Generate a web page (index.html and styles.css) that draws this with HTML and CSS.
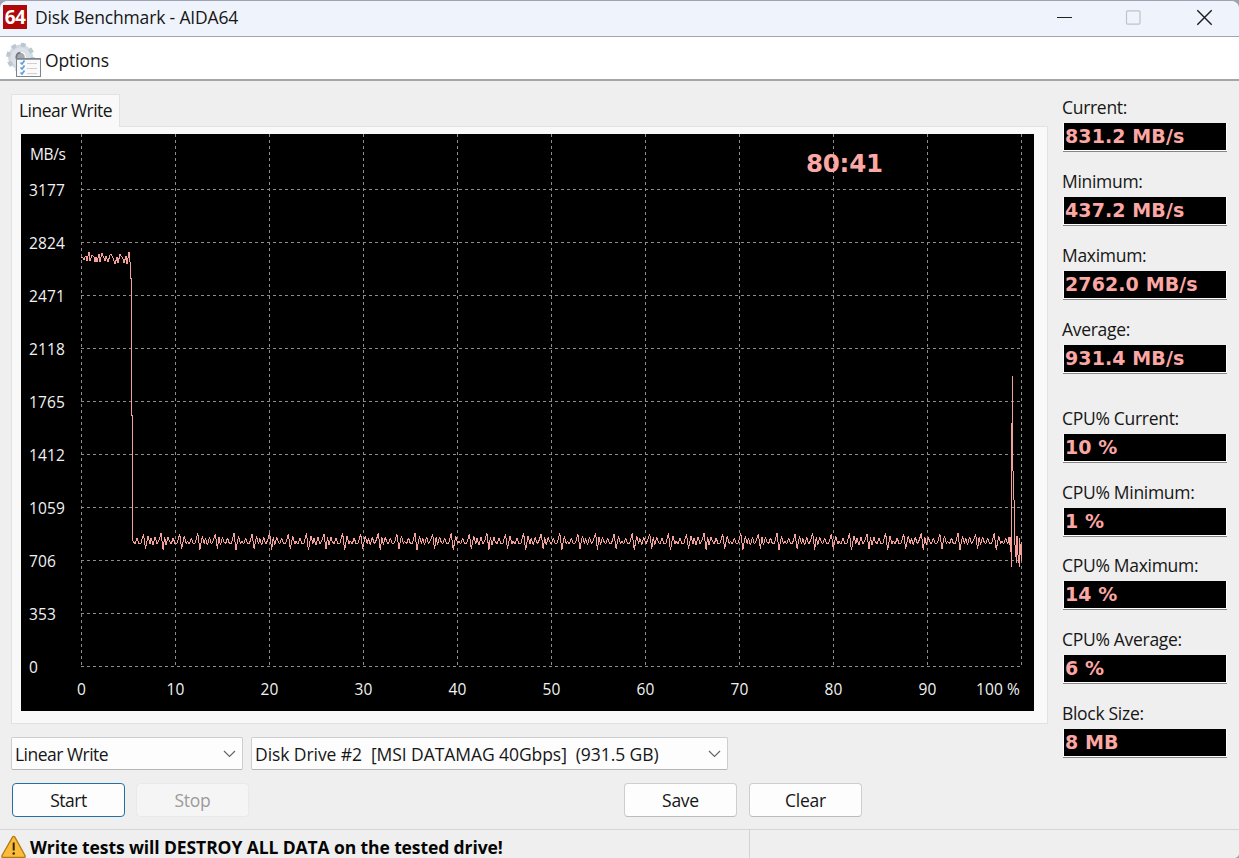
FILE: index.html
```html
<!DOCTYPE html>
<html lang="en">
<head>
<meta charset="utf-8">
<title>Disk Benchmark - AIDA64</title>
<link rel="stylesheet" href="styles.css">
</head>
<body>
<div class="window">
  <header class="titlebar">
    <span class="logo">64</span>
    <h1 class="title">Disk Benchmark - AIDA64</h1>
    <svg class="controls" width="170" height="36" viewBox="0 0 170 36">
      <path d="M6 16.500H21" stroke="#222" stroke-width="1.200"/>
      <rect x="75.500" y="9.900" width="13.500" height="13.200" rx="1.200" fill="none" stroke="#c0c2c9" stroke-width="1.200"/>
      <path d="M146.300 9.300L160.700 23.700M160.700 9.300L146.300 23.700" stroke="#1b1b20" stroke-width="1.400"/>
    </svg>
  </header>
  <nav class="menubar">
    <svg class="gear" width="36" height="38" viewBox="0 0 36 38">
      <g transform="translate(15.500 17)">
        <circle r="9" fill="none" stroke="#d3dae1" stroke-width="7"/>
        <circle r="12.300" fill="none" stroke="#bdc7d1" stroke-width="4" stroke-dasharray="4.800 4.860"/>
        <circle r="7.500" fill="none" stroke="#dbe1e7" stroke-width="4"/>
        <circle r="4.300" fill="#a4a9af"/>
        <path d="M-3 3A4.300 4.300 0 0 1 0-4.300" fill="none" stroke="#737980" stroke-width="1.800"/>
      </g>
      <rect x="11.500" y="18.500" width="24" height="18" fill="#fafafa" stroke="#7d858d"/>
      <path d="M12 19.500H35" stroke="#9aa0a6"/>
      <path d="M15.500 22.500l1.500 1.500 2.500-3.500M15.500 27.500l1.500 1.500 2.500-3.500M15.500 32.500l1.500 1.500 2.500-3.500" fill="none" stroke="#5d9fdb" stroke-width="1.700"/>
      <path d="M22 23.500H32M22 28.500H32M22 33.500H32" stroke="#d1d1d1"/>
    </svg>
    <span class="menu-label">Options</span>
  </nav>
  <main class="body">
    <section class="left">
      <div class="tab">Linear Write</div>
      <div class="panel"><svg class="chart" id="chart" width="1013" height="577" viewBox="21 134 1013 577"></svg></div>
      <div class="selects">
        <div class="select mode"><span>Linear Write</span><svg width="13" height="8" viewBox="0 0 13 8"><path d="M1 1l5.500 5.500L12 1"/></svg></div>
        <div class="select drive"><span>Disk Drive #2&nbsp; [MSI DATAMAG 40Gbps]&nbsp; (931.5 GB)</span><svg width="13" height="8" viewBox="0 0 13 8"><path d="M1 1l5.500 5.500L12 1"/></svg></div>
      </div>
      <div class="buttons">
        <button class="btn primary">Start</button>
        <button class="btn stop" disabled>Stop</button>
        <button class="btn save">Save</button>
        <button class="btn">Clear</button>
      </div>
    </section>
    <aside class="stats">
      <div class="stat"><label>Current:</label><output>831.2 MB/s</output></div>
      <div class="stat"><label>Minimum:</label><output>437.2 MB/s</output></div>
      <div class="stat"><label>Maximum:</label><output>2762.0 MB/s</output></div>
      <div class="stat average"><label>Average:</label><output>931.4 MB/s</output></div>
      <div class="stat"><label>CPU% Current:</label><output>10 %</output></div>
      <div class="stat"><label>CPU% Minimum:</label><output>1 %</output></div>
      <div class="stat"><label>CPU% Maximum:</label><output>14 %</output></div>
      <div class="stat"><label>CPU% Average:</label><output>6 %</output></div>
      <div class="stat"><label>Block Size:</label><output>8 MB</output></div>
    </aside>
  </main>
  <footer class="statusbar">
    <div class="message">
      <svg width="26" height="24" viewBox="0 0 26 24">
        <path d="M12.500 2.200Q13.700.500 14.900 2.200L25 20.500Q25.700 22.300 24 22.500H3Q1.300 22.300 2 20.500Z" fill="#fbbc3c" stroke="#b57914" stroke-width="1.300"/>
        <path d="M13.700 7.500V15.500" stroke="#332608" stroke-width="2"/><circle cx="13.700" cy="18.500" r="1.250" fill="#332608"/>
      </svg>
      <span>Write tests will DESTROY ALL DATA on the tested drive!</span>
    </div>
    <div class="spare"></div>
  </footer>
</div>
<script src="chart.js"></script>
</body>
</html>
```

FILE: styles.css
```css
* { box-sizing: border-box; }
body {
  margin: 0;
  background: #9ea2b2;
  font: 17.500px/24px "Open Sans", "Noto Sans", sans-serif;
  letter-spacing: -0.250px;
  color: #161616;
  overflow: hidden;
}
.window {
  width: 1239px;
  height: 858px;
  display: flex;
  flex-direction: column;
  background: #efefef;
  border-radius: 8px 8px 5px 0;
  border-top: 1px solid #9ea2b0;
  overflow: hidden;
}
.titlebar {
  height: 36px;
  display: flex;
  align-items: center;
  padding-left: 3px;
  background: #eff3fb;
  border-bottom: 1px solid #a3a5ad;
}
.logo {
  width: 24px;
  height: 24px;
  margin-top: -3px;
  background: #b00808;
  color: #fff;
  font: bold 19px/24px "Open Sans", sans-serif;
  letter-spacing: -0.500px;
  text-align: center;
}
.title { margin: -4px 0 0 8px; font: inherit; letter-spacing: -0.160px; }
.controls { margin-left: auto; margin-right: 18px; }
.controls path { fill: none; }
.menubar {
  height: 44px;
  display: flex;
  align-items: center;
  padding-left: 5px;
  background: #fff;
  border-bottom: 2px solid #a5a5a5;
}
.gear { margin-top: 1px; }
.menu-label { margin-left: 4px; margin-top: 3px; letter-spacing: -0.100px; }
.body { height: 748px; display: flex; }
.left { width: 1048px; padding: 13px 0 0 11px; margin-right: 14px; flex: none; }
.tab {
  position: relative;
  width: 109px;
  height: 33px;
  padding: 3px 0 0 7px;
  background: #f9f9f9;
  border: 1px solid #e2e2e2;
  border-bottom: 0;
  letter-spacing: -0.520px;
}
.panel {
  width: 1037px;
  height: 598px;
  margin-top: -1px;
  padding: 7px 0 0 9px;
  background: #f9f9f9;
  border: 1px solid #e2e2e2;
}
.chart { display: block; background: #000; }
.grid { stroke: #8c8c8c; stroke-width: 1; stroke-dasharray: 3 3; shape-rendering: crispEdges; }
.trace { fill: none; stroke: #f3a09b; stroke-width: 1; stroke-linejoin: bevel; shape-rendering: crispEdges; }
.axis { fill: #f2f2f2; font-size: 15.500px; letter-spacing: 0.100px; }
.clock { fill: #fba7a3; font: bold 24.500px "DejaVu Sans", sans-serif; letter-spacing: 0; }
.selects { display: flex; gap: 8px; margin-top: 13px; }
.select {
  height: 33px;
  display: flex;
  align-items: center;
  justify-content: space-between;
  padding: 1px 6px 0 3px;
  background: #fdfdfd;
  border: 1px solid #cecece;
  border-bottom-color: #b5b5b5;
  border-radius: 2px;
  white-space: nowrap;
}
.select path { fill: none; stroke: #666; stroke-width: 1.200; }
.mode { width: 232px; letter-spacing: -0.520px; }
.drive { width: 477px; letter-spacing: -0.070px; }
.buttons { display: flex; margin: 13px 0 0 1px; gap: 12px; }
.btn {
  width: 113px;
  height: 34px;
  padding: 0 0 1px;
  background: #fdfdfd;
  border: 1px solid #cecece;
  border-bottom-color: #bbb;
  border-radius: 4px;
  color: inherit;
  font: inherit;
  letter-spacing: inherit;
}
.primary { border-color: #2470a5; letter-spacing: -0.450px; }
.stop { background: #f5f5f5; border-color: #e9e9e9; color: #9b9b9b; margin-left: -1px; }
.save { margin-left: 363px; }
.stats { padding-top: 14px; width: 165px; }
.stat { height: 73.900px; }
.average { height: 89px; }
.stat label { display: block; height: 28px; letter-spacing: -0.300px; }
.stat output {
  display: block;
  width: 164px;
  height: 28px;
  margin-left: 1px;
  padding-left: 1px;
  background: #000;
  border: solid #fff;
  border-width: 0 1px 1px;
  box-shadow: 0 1px #858585;
  color: #fba7a3;
  font: bold 19px/27px "DejaVu Sans", sans-serif;
  letter-spacing: 0.100px;
}
.statusbar {
  height: 29px;
  display: flex;
  border-top: 1px solid #d4d4d4;
  background: #efefef;
}
.message {
  width: 750px;
  display: flex;
  padding-top: 5px;
  border-right: 1px solid #d4d4d4;
  color: #050505;
  font-weight: bold;
  letter-spacing: -0.100px;
  white-space: nowrap;
}
.message span { margin-left: 4px; }
.spare { flex: 1; }
```

FILE: chart.js
```js
const chart = document.getElementById('chart');
const ns = 'http://www.w3.org/2000/svg';
function add(name, attrs, text) {
  const el = document.createElementNS(ns, name);
  for (const key in attrs) el.setAttribute(key, attrs[key]);
  if (text !== undefined) el.textContent = text;
  chart.appendChild(el);
}

for (let i = 0; i <= 10; i++) {
  const x = 81.5 + 94 * i;
  add('path', { class: 'grid', d: `M${x} 134V667` });
  if (i < 10) add('text', { class: 'axis', x, y: 695, 'text-anchor': 'middle' }, i * 10);
}
add('text', { class: 'axis', x: 1020, y: 695, 'text-anchor': 'end', textLength: 44 }, '100 %');
for (let i = 0; i < 10; i++) {
  const y = 189.5 + 53 * i;
  add('path', { class: 'grid', d: `M81 ${y}H1022` });
  add('text', { class: 'axis', x: 29, y: y + 6.5 }, 3177 - 353 * i);
}
add('text', { class: 'axis', x: 30, y: 160, textLength: 36 }, 'MB/s');

let d = 'M81 257L83 258L84 260L85 257L86 256L87 261L89 252L90 261L92 255L94 257L95 262L96 257L97 262L99 254L100 262L102 253L105 261L106 256L108 262L110 255L111 254L113 258L115 264L117 257L118 263L120 254L123 259L124 263L126 256L127 264L129 252L130 262L130.5 278L131.5 279V415L132.500 416V541';
const wave = [[0, 541], [2, 544], [4, 538], [6, 544], [8, 543], [10.500, 534], [12.500, 549], [15, 536], [17, 544]];
const smallWave = [[0, 538], [2, 545], [4, 537], [6, 544], [8, 540], [10, 534], [12, 549], [13.500, 537], [15, 545], [17, 537]];
for (let k = 0, x = 133; x < 1008; x += 18.1, k++) {
  for (const [dx, y] of (k % 3 === 1 ? smallWave : wave)) {
    const px = x + dx;
    const outer = y > 546 ? k % 2 : y < 536 ? -(k % 2) : 0;
    if (px < 1009) d += `L${px.toFixed(1)} ${y + outer}`;
  }
}
d += 'L1009 537L1010 545L1010.5 537L1011.500 567V472L1012.5 376V455L1013.500 486L1014.500 514L1015 545L1016.5 563L1017 536L1018 555L1019.5 567L1019.5 538L1021.5 561V542';
add('path', { class: 'trace', d });
add('text', { class: 'clock', x: 806, y: 172, textLength: 77 }, '80:41');
```
